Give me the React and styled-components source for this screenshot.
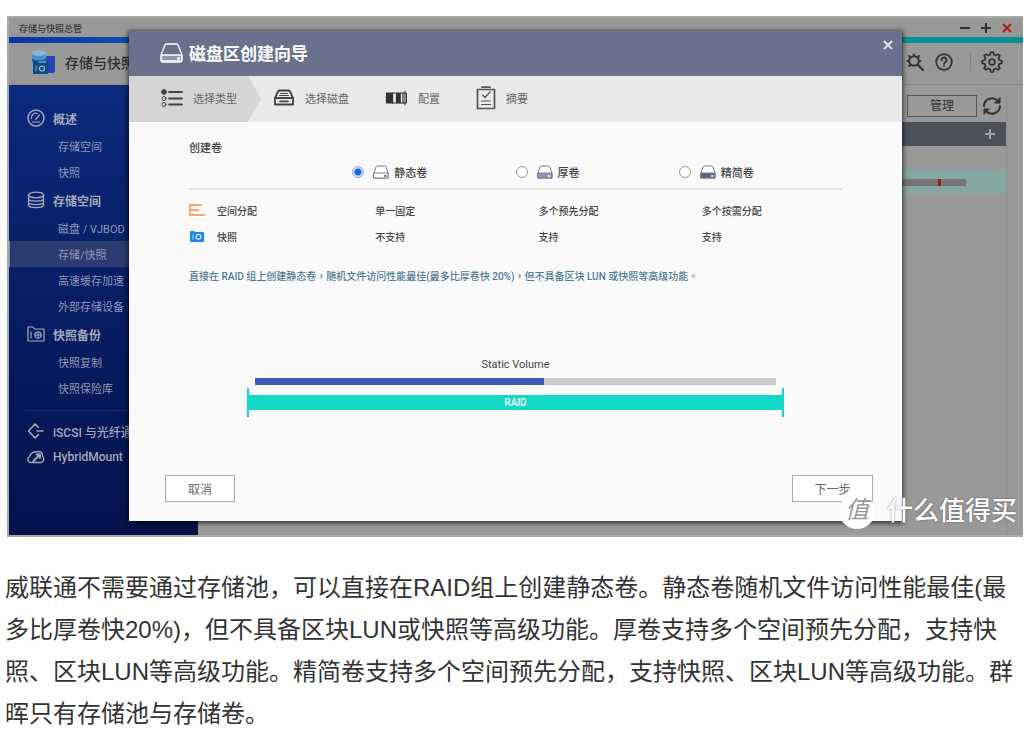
import React, { useState } from "react";
import styled, { createGlobalStyle, css } from "styled-components";

const GlobalStyle = createGlobalStyle`
  *, *::before, *::after { box-sizing: border-box; }
  body {
    margin: 0;
    background: #fff;
    color: #333;
    font-family: Roboto, "Noto Sans CJK SC", sans-serif;
    font-size: 10px;
  }
  button { font-family: inherit; cursor: pointer; }
  svg { display: block; flex: none; }
`;

const Article = styled.main`
  padding: 16px 1px 0 7px;
`;

/* Application window behind the dialog */
const Window = styled.section`
  position: relative;
  display: flex;
  flex-direction: column;
  height: 521px;
  padding: 2px 0 2px 2px;
  background: #a9a9a9;
`;

const TitleBar = styled.header`
  display: flex;
  align-items: center;
  justify-content: space-between;
  height: 19px;
  padding: 1px 10px 0;
  background: #989896;
  color: #3a3a3a;
  font-size: 9px;
  font-weight: 500;
`;

const WindowControls = styled.div`
  display: flex;
  gap: 9px;
`;

const IconButton = styled.button`
  display: flex;
  padding: 0;
  border: 0;
  background: none;
  color: ${(p) => p.$color || "#333"};
`;

const AccentStrip = styled.div`
  height: 6px;
  background: linear-gradient(90deg, #0a33a5 0%, #1050b0 14%, #0b8f9b 80%, #088e96 100%);
`;

const AppBar = styled.div`
  display: flex;
  align-items: center;
  justify-content: space-between;
  height: 42px;
  padding: 0 20px 3px 22px;
  background: #999;
  border-bottom: 1px solid #8a8a8a;
`;

const Brand = styled.div`
  display: flex;
  align-items: center;
  gap: 10px;
  color: #2d2d2d;
  font-size: 14px;
  font-weight: 500;
`;

const Tools = styled.div`
  display: flex;
  align-items: center;
  gap: 10px;
`;

const ToolDivider = styled.span`
  width: 1px;
  height: 18px;
  margin: 0 0 0 7px;
  background: #858585;
`;

const Workspace = styled.div`
  display: flex;
  flex: 1;
  min-height: 0;
`;

const Sidebar = styled.nav`
  flex: none;
  width: 189px;
  padding-top: 18px;
  background: linear-gradient(#0b2a7c, #061d63 50%, #04124a);
`;

const navLink = css`
  display: flex;
  align-items: center;
  text-decoration: none;
  white-space: nowrap;
`;

const NavHeading = styled.a`
  ${navLink}
  gap: 8px;
  height: ${(p) => (p.$compact ? 26 : 30)}px;
  padding-left: 18px;
  color: #a3a9ba;
  font-size: 12px;
  font-weight: ${(p) => (p.$compact ? 500 : 700)};
`;

const NavItem = styled.a`
  ${navLink}
  height: 26px;
  padding-left: 49px;
  color: #8f98b3;
  font-size: 11px;
  ${(p) =>
    p.$active &&
    css`
      background: #2c3c70;
      box-shadow: inset 1px 0 #8890a8;
    `}
`;

const NavDivider = styled.hr`
  height: 1px;
  margin: 9px 16px 7px;
  border: 0;
  background: #12296a;
`;

const Content = styled.div`
  flex: 1;
  padding: 8px 16px 0;
  background: #999;
`;

const ContentPane = styled.div`
  height: 100%;
  border-right: 1px solid #8e8e8e;
`;

const ContentTools = styled.div`
  display: flex;
  align-items: center;
  justify-content: flex-end;
  gap: 5px;
  height: 29px;
  padding: 0 4px 4px 0;
`;

const ManageButton = styled.button`
  width: 70px;
  height: 22px;
  padding: 0;
  border: 1px solid #555;
  background: none;
  color: #333;
  font-size: 12px;
  line-height: 20px;
`;

const ListHeader = styled.div`
  display: flex;
  align-items: center;
  justify-content: flex-end;
  height: 24px;
  padding-right: 10px;
  background: #4d505d;
`;

const ListRow = styled.div`
  display: flex;
  align-items: center;
  justify-content: flex-end;
  height: 24px;
  padding-right: 40px;
  background: ${(p) => (p.$selected ? "#86a6a1" : "none")};
`;

const Usage = styled.div`
  display: flex;
  justify-content: flex-end;
  width: 120px;
  height: 7px;
  padding-right: 25px;
  background: #767676;
`;

const Threshold = styled.span`
  width: 3px;
  background: #a01c1c;
`;

/* Wizard dialog */
const Dialog = styled.section`
  position: absolute;
  inset: 15px 121px 16px 122px;
  display: flex;
  flex-direction: column;
  background: #fafafa;
  box-shadow: 0 1px 5px 1px rgba(0, 0, 0, 0.7);
`;

const DialogHeader = styled.header`
  display: flex;
  justify-content: space-between;
  height: 45px;
  padding: 0 8px 2px 31px;
  background: #6a718d;
`;

const DialogTitle = styled.h1`
  display: flex;
  align-items: center;
  gap: 6px;
  margin: 0;
  color: #fff;
  font-size: 17px;
  font-weight: 700;
`;

const CloseButton = styled(IconButton)`
  align-self: flex-start;
  margin-top: 8px;
`;

const Steps = styled.ol`
  display: flex;
  height: 46px;
  margin: 0;
  padding: 0;
  list-style: none;
  background: #e9e9e9;
`;

const Step = styled.li`
  display: flex;
  align-items: center;
  gap: 10px;
  padding: 0 24px 2px 12px;
  color: #666;
  font-size: 11px;
  ${(p) =>
    p.$current &&
    css`
      padding-left: 32px;
      background: #d5d5d5;
      clip-path: polygon(0 0, calc(100% - 13px) 0, 100% 50%, calc(100% - 13px) 100%, 0 100%);
    `}
`;

const DialogBody = styled.div`
  padding: 18px 60px 0;
`;

const SectionTitle = styled.h2`
  margin: 0;
  color: #444;
  font-size: 11px;
  font-weight: 500;
  line-height: 18px;
`;

const VolumeTable = styled.table`
  width: 100%;
  table-layout: fixed;
  border-collapse: collapse;
  color: #444;
  text-align: left;

  thead th { height: 31px; padding: 0 0 2px; border-bottom: 2px solid #e4e4e4; }
  tbody::before { content: ""; display: block; height: 8px; }
  tbody th, tbody td { height: 26px; padding: 0 0 2px; font-weight: 500; }
  tbody td { padding-left: 23px; }
`;

const RadioLabel = styled.label`
  display: flex;
  align-items: center;
  color: #444;
  font-size: 11px;
  font-weight: 500;

  svg { margin: 0 5px 0 9px; }
`;

const Radio = styled.input`
  appearance: none;
  width: 12px;
  height: 12px;
  margin: 0;
  border: 1px solid #999;
  border-radius: 50%;
  background: #fff;

  &:checked {
    border-color: #8db2ec;
    background: radial-gradient(circle, #1c66e0 0 3px, #cfe0fa 4px);
  }
`;

const RowLabel = styled.span`
  display: flex;
  align-items: center;
  gap: 12px;
`;

const Description = styled.p`
  margin: 17px 0 0;
  color: #4d7a94;
  font-family: Roboto, "Noto Sans CJK TC", sans-serif;
  font-weight: 500;
  line-height: 20px;
`;

const Diagram = styled.figure`
  margin: 71px 58px 0;
`;

const DiagramTitle = styled.figcaption`
  color: #444;
  font-size: 11px;
  line-height: 14px;
  text-align: center;
`;

const VolumeBar = styled.div`
  height: 7px;
  margin: 6px 8px 3px;
  background: linear-gradient(90deg, #4159b8 0 55.5%, #c9c9c9 55.5%);
`;

const RaidSpan = styled.div`
  padding: 7px 0;
  border: solid #14d8c6;
  border-width: 0 2px;
`;

const RaidBar = styled.div`
  background: #14d8c6;
  color: #fff;
  font-weight: 500;
  line-height: 15px;
  text-align: center;
`;

const DialogFooter = styled.footer`
  display: flex;
  justify-content: space-between;
  margin-top: auto;
  padding: 0 29px 19px 36px;
`;

const DialogButton = styled.button`
  width: ${(p) => (p.$wide ? 81 : 70)}px;
  height: 27px;
  padding: 0 0 1px;
  border: 1px solid #aaa;
  background: #fff;
  color: #666;
  font-size: 12px;
`;

const Watermark = styled.div`
  position: absolute;
  right: 6px;
  bottom: 7px;
  display: flex;
  align-items: center;
  gap: 12px;
  color: #fff;
  font-size: 26px;
  font-weight: 500;
  line-height: 38px;
  text-shadow: 0 0 2px rgba(0, 0, 0, 0.45);
`;

const WatermarkBadge = styled.span`
  width: 36px;
  height: 36px;
  border-radius: 50%;
  background: #fff;
  color: #999;
  font-size: 24px;
  font-style: italic;
  font-weight: 400;
  line-height: 34px;
  text-align: center;
  text-shadow: none;
`;

const Paragraph = styled.p`
  margin: 30px 0 0 -2px;
  color: #333;
  font-family: "Liberation Sans", "Noto Sans CJK SC", sans-serif;
  font-size: 24px;
  line-height: 42px;
`;

const Svg = ({ w, h, vb, children, ...rest }) => (
  <svg
    width={w}
    height={h}
    viewBox={vb || `0 0 ${w} ${h}`}
    fill="none"
    stroke="currentColor"
    strokeLinecap="round"
    strokeLinejoin="round"
    aria-hidden="true"
    {...rest}
  >
    {children}
  </svg>
);

const MinusIcon = () => (
  <Svg w={12} h={12} strokeWidth="2" strokeLinecap="butt"><path d="M1 6h10" /></Svg>
);
const PlusIcon = () => (
  <Svg w={12} h={12} strokeWidth="2" strokeLinecap="butt"><path d="M1 6h10M6 1v10" /></Svg>
);
const CrossIcon = () => (
  <Svg w={12} h={12} strokeWidth="2" strokeLinecap="butt"><path d="M2 2l8 8M10 2l-8 8" /></Svg>
);

const BrandIcon = () => (
  <Svg w={24} h={26} stroke="none">
    <path d="M13 9l3-2h8v15a2 2 0 0 1-2 2h-9z" fill="#2444b4" />
    <path d="M1 4v10h14V4z" fill="#4a93c6" />
    <ellipse cx="8" cy="4" rx="7" ry="3" fill="#8fb6d0" />
    <path d="M1 9c3 3 11 3 14 0v3H1z" fill="#1d62ad" />
    <path d="M2 12h5l1.500 2H17v11H2z" fill="#0d4a7d" />
    <circle cx="11" cy="19.500" r="2.500" stroke="#9cc3d4" strokeWidth="1.200" />
    <path d="M5 17v5" stroke="#7fabc4" strokeWidth="1" />
  </Svg>
);

const DiagnoseIcon = () => (
  <Svg w={20} h={20} strokeWidth="2">
    <circle cx="9" cy="9" r="4.800" />
    <path d="M9 4V2.500M5.500 5.500l-1.500-1.500M12.500 5.500l1.500-1.500M4 9H2.500M14 9h1.500M5.500 12.500L4 14" />
    <path d="M12.500 12.500L18 18" strokeWidth="2.400" />
  </Svg>
);

const HelpIcon = () => (
  <Svg w={18} h={18} strokeWidth="1.800">
    <circle cx="9" cy="9" r="7.800" />
    <path d="M6.500 7a2.500 2.500 0 1 1 3.700 2.200C9.300 9.700 9 10 9 10.800M9 13v.2" />
  </Svg>
);

const GearIcon = () => (
  <Svg w={22} h={22} strokeWidth="1.800">
    <path d="M9 3.800L9.800 1.200h2.400L13 3.800l1.700.7 2.400-1.300 1.700 1.700-1.300 2.400.7 1.700 2.600.8v2.400l-2.600.8-.7 1.700 1.300 2.400-1.700 1.700-2.400-1.300-1.700.7-.8 2.600H9.800L9 18.200l-1.700-.7-2.400 1.300-1.700-1.700 1.300-2.400L3.800 13l-2.600-.8V9.800L3.800 9l.7-1.700-1.300-2.400 1.700-1.700 2.400 1.300z" />
    <circle cx="11" cy="11" r="2.800" />
  </Svg>
);

const RefreshIcon = () => (
  <Svg w={20} h={20} strokeWidth="2">
    <path d="M2 10a8 8 0 0 1 14-5M18 10a8 8 0 0 1-14 5" />
    <path d="M18 2v5h-5zM2 18v-5h5z" fill="currentColor" strokeWidth="1" />
  </Svg>
);

const GaugeIcon = () => (
  <Svg w={18} h={18} strokeWidth="1.500">
    <circle cx="9" cy="9" r="8" />
    <path d="M4.500 9.500a4.500 4.500 0 0 1 6-5M8.500 10.500l4-4.500M5.500 13h7" strokeWidth="1.200" />
  </Svg>
);

const DatabaseIcon = () => (
  <Svg w={18} h={18} strokeWidth="1.300">
    <ellipse cx="9" cy="4" rx="7.500" ry="2.800" />
    <path d="M1.500 4v10c0 3.500 15 3.500 15 0V4M1.500 7.500c0 3.500 15 3.500 15 0M1.500 11c0 3.500 15 3.500 15 0" />
  </Svg>
);

const SnapshotIcon = () => (
  <Svg w={18} h={18} strokeWidth="1.200">
    <path d="M1 16V2h5l1.500 2H17v12z" />
    <circle cx="11" cy="10" r="3.200" />
    <path d="M4 7v6M8 10h6M11 8v4" />
  </Svg>
);

const IscsiIcon = () => (
  <Svg w={18} h={18} strokeWidth="1.600">
    <path d="M11.500 5.500L8 2 1.500 9 8 16l3.500-3.500M10 9h6" />
  </Svg>
);

const MountIcon = () => (
  <Svg w={18} h={18} strokeWidth="1.400">
    <path d="M4 14.500a3.200 3.200 0 0 1-1.500-6C3.500 5 7 3 10 4c3-1.500 6 1 5.500 4 2 2 1.500 5-1 6.500z" />
    <path d="M6.500 13l6-6M9.500 6.500h3.500V10" strokeWidth="2" />
  </Svg>
);

const DriveIcon = () => (
  <Svg w={23} h={20} strokeWidth="1.300">
    <path d="M1 12l4-10q.4-1 1.500-1h10q1.100 0 1.500 1l4 10v5q0 2-2 2H3q-2 0-2-2z" />
    <path d="M1.500 12h20v6h-20z" fill="#8f95ab" />
    <circle cx="18.500" cy="15.500" r=".8" fill="currentColor" />
  </Svg>
);

const ListIcon = () => (
  <Svg w={22} h={18} color="#444" strokeWidth="1">
    <circle cx="3" cy="3" r="2.400" fill="currentColor" />
    <circle cx="3" cy="9.500" r="2" />
    <circle cx="3" cy="15.500" r="2" />
    <path d="M8 3h13M8 9.500h13M8 15.500h13" strokeWidth="1.800" />
  </Svg>
);

const DiskIcon = () => (
  <Svg w={22} h={18} color="#444" strokeWidth="1.800">
    <path d="M2 9l3-6.500Q5.500 1.500 7 1.500h8q1.500 0 2 1L20 9v6.500H2z" />
    <path d="M2 9h18M7 12.300h8" />
    <path d="M7.500 4.500h7M6.500 6.500h9" strokeWidth="1" />
  </Svg>
);

const ConfigIcon = () => (
  <Svg w={23} h={16} color="#333" strokeWidth="1.200">
    <path d="M1.500 3h6v10h-6z" fill="currentColor" />
    <path d="M7.500 3h4v10h-4zM15 3h3v10h-3z" />
    <path d="M12 3h3v10h-3z" fill="currentColor" />
    <path d="M18 3h3.500v10H18M20 1v14" strokeWidth="1" />
  </Svg>
);

const SummaryIcon = () => (
  <Svg w={20} h={24} color="#555" strokeWidth="1.700">
    <path d="M1.500 3.500h17v19h-17zM6 1.200h8" />
    <path d="M6.500 9l2.500 2.500L14 6" strokeWidth="1.200" />
    <path d="M5.500 15h9M5.500 18.500h9" strokeWidth="1.200" />
  </Svg>
);

const VolumeIcon = ({ fill }) => (
  <Svg w={16} h={14} color="#777d95" strokeWidth="1">
    <path d="M1 8l2-6q.3-1 1.300-1h7.400q1 0 1.300 1l2 6v5H1z" fill="#fff" />
    <path d="M1 8h14v5H1z" fill={fill} />
    <path d="M11.500 11h1.500" stroke={fill === "#fff" ? "#444b68" : "#fff"} strokeWidth="1.500" />
  </Svg>
);

const AllocationIcon = () => (
  <Svg w={16} h={14} color="#f6ab70" strokeWidth="2" strokeLinecap="butt">
    <path d="M1 1v12M1 2h12M1 7h9M1 12h15" />
  </Svg>
);

const CameraIcon = () => (
  <Svg w={16} h={12} stroke="none">
    <path d="M1 2q0-1 1-1h3l1 1h8q1 0 1 1v8q0 1-1 1H2q-1 0-1-1z" fill="#1f86f0" />
    <circle cx="9.500" cy="6.700" r="2.400" fill="#1f86f0" stroke="#d5e9ff" strokeWidth="1.200" />
    <path d="M4 4.500v5" stroke="#a5d0ff" />
  </Svg>
);

const navigation = [
  { title: "概述", Icon: GaugeIcon, items: ["存储空间", "快照"] },
  {
    title: "存储空间",
    Icon: DatabaseIcon,
    items: ["磁盘 / VJBOD", "存储/快照", "高速缓存加速", "外部存储设备"],
  },
  { title: "快照备份", Icon: SnapshotIcon, items: ["快照复制", "快照保险库"] },
];

const steps = [
  { label: "选择类型", Icon: ListIcon },
  { label: "选择磁盘", Icon: DiskIcon },
  { label: "配置", Icon: ConfigIcon },
  { label: "摘要", Icon: SummaryIcon },
];

const volumes = [
  { id: "static", label: "静态卷", fill: "#fff", allocation: "单一固定", snapshot: "不支持" },
  { id: "thick", label: "厚卷", fill: "#8e94ac", allocation: "多个预先分配", snapshot: "支持" },
  { id: "thin", label: "精简卷", fill: "#5d6480", allocation: "多个按需分配", snapshot: "支持" },
];

function Navigation() {
  return (
    <Sidebar>
      {navigation.map(({ title, Icon, items }) => (
        <React.Fragment key={title}>
          <NavHeading href="#"><Icon />{title}</NavHeading>
          {items.map((item) => (
            <NavItem key={item} href="#" $active={item === "存储/快照"}>{item}</NavItem>
          ))}
        </React.Fragment>
      ))}
      <NavDivider />
      <NavHeading href="#" $compact><IscsiIcon />iSCSI 与光纤通道</NavHeading>
      <NavHeading href="#" $compact><MountIcon />HybridMount</NavHeading>
    </Sidebar>
  );
}

function Wizard() {
  const [selected, setSelected] = useState("static");
  return (
    <Dialog role="dialog" aria-labelledby="wizard-title">
      <DialogHeader>
        <DialogTitle id="wizard-title"><DriveIcon />磁盘区创建向导</DialogTitle>
        <CloseButton $color="#dfe1e8" aria-label="关闭"><CrossIcon /></CloseButton>
      </DialogHeader>
      <Steps>
        {steps.map(({ label, Icon }, i) => (
          <Step key={label} $current={i === 0}><Icon />{label}</Step>
        ))}
      </Steps>
      <DialogBody>
        <SectionTitle>创建卷</SectionTitle>
        <VolumeTable>
          <thead>
            <tr>
              <th />
              {volumes.map((v) => (
                <th key={v.id} scope="col">
                  <RadioLabel>
                    <Radio
                      type="radio"
                      name="volume"
                      checked={selected === v.id}
                      onChange={() => setSelected(v.id)}
                    />
                    <VolumeIcon fill={v.fill} />
                    {v.label}
                  </RadioLabel>
                </th>
              ))}
            </tr>
          </thead>
          <tbody>
            <tr>
              <th scope="row"><RowLabel><AllocationIcon />空间分配</RowLabel></th>
              {volumes.map((v) => <td key={v.id}>{v.allocation}</td>)}
            </tr>
            <tr>
              <th scope="row"><RowLabel><CameraIcon />快照</RowLabel></th>
              {volumes.map((v) => <td key={v.id}>{v.snapshot}</td>)}
            </tr>
          </tbody>
        </VolumeTable>
        <Description>
          直接在 RAID 组上创建静态卷，随机文件访问性能最佳(最多比厚卷快 20%)，但不具备区块 LUN 或快照等高级功能。
        </Description>
        <Diagram>
          <DiagramTitle>Static Volume</DiagramTitle>
          <VolumeBar />
          <RaidSpan><RaidBar>RAID</RaidBar></RaidSpan>
        </Diagram>
      </DialogBody>
      <DialogFooter>
        <DialogButton>取消</DialogButton>
        <DialogButton $wide>下一步</DialogButton>
      </DialogFooter>
    </Dialog>
  );
}

export default function App() {
  return (
    <Article>
      <GlobalStyle />
      <Window>
        <TitleBar>
          存储与快照总管
          <WindowControls>
            <IconButton aria-label="最小化"><MinusIcon /></IconButton>
            <IconButton aria-label="最大化"><PlusIcon /></IconButton>
            <IconButton aria-label="关闭" $color="#b01c1c"><CrossIcon /></IconButton>
          </WindowControls>
        </TitleBar>
        <AccentStrip />
        <AppBar>
          <Brand><BrandIcon />存储与快照总管</Brand>
          <Tools>
            <IconButton aria-label="诊断"><DiagnoseIcon /></IconButton>
            <IconButton aria-label="帮助"><HelpIcon /></IconButton>
            <ToolDivider />
            <IconButton aria-label="设置"><GearIcon /></IconButton>
          </Tools>
        </AppBar>
        <Workspace>
          <Navigation />
          <Content>
            <ContentPane>
              <ContentTools>
                <ManageButton>管理</ManageButton>
                <IconButton aria-label="刷新"><RefreshIcon /></IconButton>
              </ContentTools>
              <ListHeader>
                <IconButton aria-label="添加" $color="#a5a5a5"><PlusIcon /></IconButton>
              </ListHeader>
              <ListRow />
              <ListRow $selected><Usage><Threshold /></Usage></ListRow>
            </ContentPane>
          </Content>
        </Workspace>
        <Wizard />
        <Watermark><WatermarkBadge>值</WatermarkBadge>什么值得买</Watermark>
      </Window>
      <Paragraph>
        威联通不需要通过存储池，可以直接在RAID组上创建静态卷。静态卷随机文件访问性能最佳(最多比厚卷快20%)，但不具备区块LUN或快照等高级功能。厚卷支持多个空间预先分配，支持快照、区块LUN等高级功能。精简卷支持多个空间预先分配，支持快照、区块LUN等高级功能。群晖只有存储池与存储卷。
      </Paragraph>
    </Article>
  );
}
